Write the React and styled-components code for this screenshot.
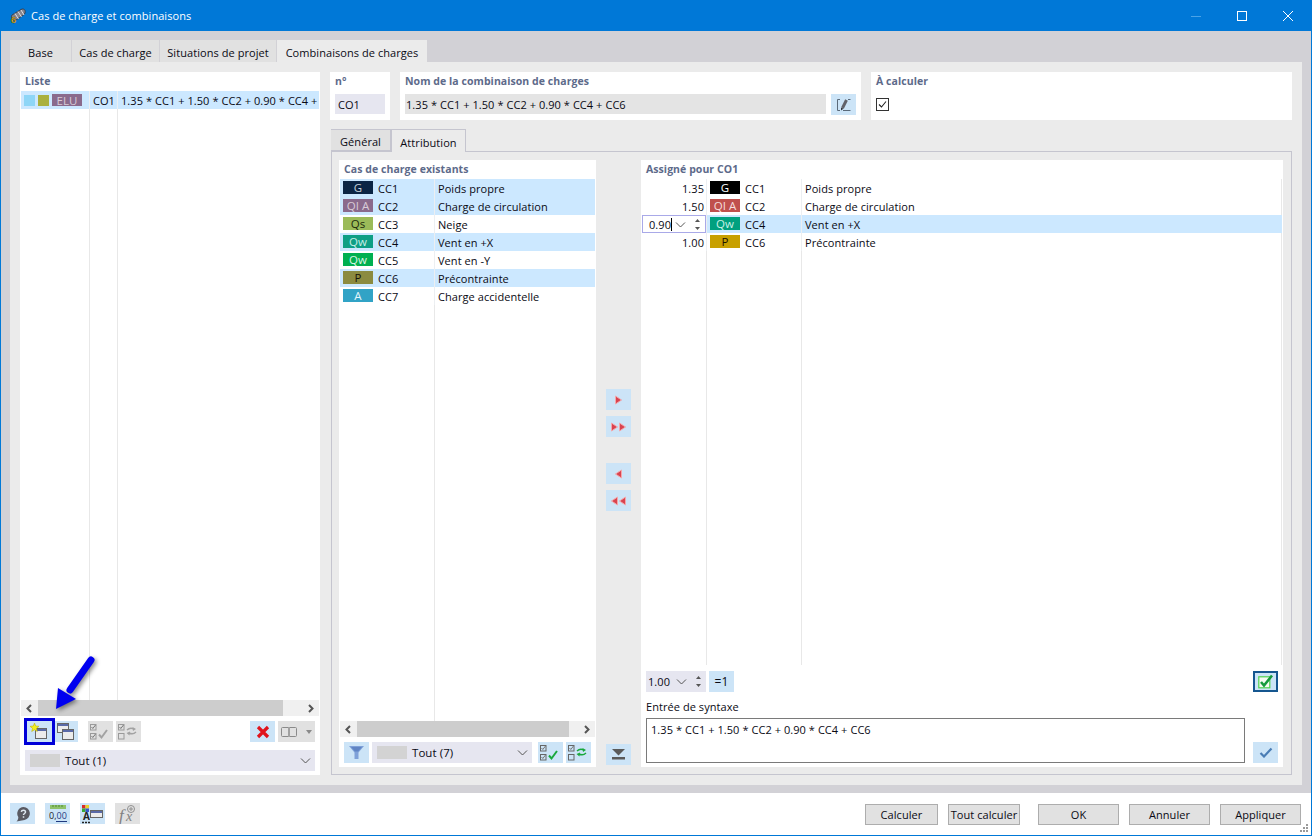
import React from "react";
import styled, { createGlobalStyle } from "styled-components";

const Global = createGlobalStyle`
    html, body { margin: 0; padding: 0; background: #fff; }
    * { box-sizing: border-box; }
    body {
        font-family: "Open Sans", "Liberation Sans", sans-serif;
        font-size: 11px;
        letter-spacing: 0.06px;
        color: #0a0a14;
    }
`;

const Win = styled.div`
    position: relative;
    width: 1312px;
    height: 836px;
    display: flex;
    flex-direction: column;
    border: 1px solid #0078d7;
    border-top: 0;
    overflow: hidden;
`;

const TitleBar = styled.div`
    height: 31px;
    flex: none;
    display: flex;
    align-items: center;
    padding-left: 8px;
    background: #0078d7;
    color: #fff;
    font-size: 11px;
`;

const TitleText = styled.span`
    margin-left: 4px;
`;

const WinCtrl = styled.div`
    width: 46px;
    height: 31px;
    display: flex;
    align-items: center;
    justify-content: center;
    margin-left: ${(p) => (p.$first ? "auto" : "0")};
`;

const Body = styled.div`
    flex: 1;
    min-height: 0;
    display: flex;
    flex-direction: column;
    padding: 9px 9px 8px;
    background: #d2d1d6;
`;

const TabRow = styled.div`
    height: 22px;
    flex: none;
    display: flex;
    gap: 1px;
`;

const Tab = styled.div`
    width: ${(p) => p.$w}px;
    display: flex;
    align-items: center;
    justify-content: center;
    padding-top: 2px;
    background: ${(p) => (p.$active ? "#ebebeb" : "#e1e1e1")};
`;

const MainPanel = styled.div`
    flex: 1;
    min-height: 0;
    display: grid;
    grid-template-columns: 300px 1fr;
    gap: 10px;
    padding: 10px;
    background: #ebebeb;
`;

const Card = styled.div`
    background: #fff;
    display: flex;
    flex-direction: column;
    min-height: 0;
    min-width: 0;
`;

const Heading = styled.div`
    height: 19px;
    flex: none;
    padding: 2px 0 0 ${(p) => p.$pad || 5}px;
    font-weight: 700;
    font-size: 10.5px;
    color: #5d6a8a;
    white-space: nowrap;
`;

const ListArea = styled.div`
    flex: 1;
    min-height: 0;
    margin: 0 ${(p) => p.$mr || 1}px 0 1px;
    overflow: hidden;
    background-image: ${(p) =>
        p.$lines.map(() => "linear-gradient(#e8e8e8, #e8e8e8)").join(",")};
    background-size: 1px 100%;
    background-repeat: no-repeat;
    background-position: ${(p) => p.$lines.map((x) => `${x}px 0`).join(",")};
`;

const Row = styled.div`
    height: 18px;
    display: grid;
    grid-template-columns: ${(p) => p.$cols};
    align-items: stretch;
    background: ${(p) => (p.$on ? "#cce8ff" : "transparent")};
    white-space: nowrap;
`;

const Cell = styled.div`
    display: flex;
    align-items: center;
    gap: ${(p) => p.$gap || 0}px;
    padding-left: ${(p) => p.$pad || 0}px;
    min-width: 0;
    overflow: hidden;
    border-left: ${(p) => (p.$line ? "1px solid #eceff2" : "0")};
`;

const NumCell = styled(Cell)`
    justify-content: flex-end;
    padding-right: 2px;
`;

const EditCell = styled(Cell)`
    background: #fff;
`;

const Swatch = styled.span`
    width: 11px;
    height: 11px;
    flex: none;
    background: ${(p) => p.$c};
`;

const Badge = styled.span`
    width: 30px;
    height: 13px;
    flex: none;
    display: flex;
    align-items: center;
    justify-content: center;
    background: ${(p) => p.$c};
    color: ${(p) => p.$t};
    font-size: 11.5px;
    letter-spacing: 0;
    margin-top: -1px;
`;

const ComboBadge = styled(Badge)`
    height: 12px;
    margin-top: 0;
`;

const Scroll = styled.div`
    height: 16px;
    flex: none;
    margin: 0 1px;
    display: flex;
    align-items: center;
    justify-content: space-between;
    background: #f0f0f0;
`;

const ScrollEnd = styled.div`
    width: 17px;
    height: 16px;
    flex: none;
    display: flex;
    align-items: center;
    justify-content: center;
`;

const Thumb = styled.div`
    height: 16px;
    width: ${(p) => p.$w}px;
    background: #cdcdcd;
`;

const ScrollRest = styled.div`
    flex: 1;
    max-width: ${(p) => p.$w}px;
`;

const Toolbar = styled.div`
    height: 21px;
    flex: none;
    display: flex;
    margin-top: 5px;
    padding-left: 7px;
`;

const IconBtn = styled.div`
    width: ${(p) => p.$w || 25}px;
    height: 21px;
    flex: none;
    display: flex;
    align-items: center;
    justify-content: center;
    margin-left: ${(p) => p.$ml || 0}px;
    background: ${(p) => (p.$off ? "#e1e1e1" : "#cce4f7")};
    outline: ${(p) => (p.$mark ? "3px solid #0000d8" : "0")};
    box-shadow: ${(p) => (p.$focus ? "inset 0 0 0 2px #15568f" : "none")};
    position: relative;
    z-index: ${(p) => (p.$mark ? 1 : 0)};
`;

const Combo = styled.div`
    height: 21px;
    flex: none;
    display: flex;
    align-items: center;
    width: ${(p) => p.$w}px;
    margin: ${(p) => p.$m || 0};
    padding: 0 4px 0 5px;
    background: #e6e6f0;
`;

const ComboSwatch = styled.span`
    width: 30px;
    height: 13px;
    flex: none;
    background: #d3d3d3;
    margin-right: 5px;
`;

const ComboText = styled.span`
    flex: 1;
    font-size: 11.5px;
`;

const RightCol = styled.div`
    display: flex;
    flex-direction: column;
    min-width: 0;
    min-height: 0;
`;

const TopRow = styled.div`
    height: 48px;
    flex: none;
    display: grid;
    grid-template-columns: 60px 461px 421px;
    gap: 10px;
`;

const TopCard = styled(Card)`
    padding-right: 5px;
`;

const FieldRow = styled.div`
    display: flex;
    gap: 5px;
    padding: 3px 0 0 5px;
`;

const Field = styled.div`
    flex: 1;
    height: 20px;
    display: flex;
    align-items: center;
    padding-left: ${(p) => p.$pad || 3}px;
    background: ${(p) => (p.$grey ? "#e4e4e4" : "#e6e6f0")};
    white-space: nowrap;
`;

const Check = styled.div`
    width: 13px;
    height: 13px;
    margin: 7px 0 0 5px;
    border: 1px solid #333;
    display: flex;
    align-items: center;
    justify-content: center;
`;

const SubTabs = styled.div`
    height: 22px;
    flex: none;
    margin-top: 9px;
    display: flex;
    padding-left: 1px;
`;

const SubTab = styled.div`
    width: ${(p) => p.$w}px;
    display: flex;
    align-items: center;
    justify-content: center;
    padding-top: 2px;
    background: ${(p) => (p.$active ? "#ebebeb" : "#e1e1e1")};
    border: 1px solid #c5c5cf;
    border-left-width: ${(p) => (p.$active ? 1 : 0)}px;
    border-bottom-width: ${(p) => (p.$active ? 0 : 1)}px;
    margin-bottom: ${(p) => (p.$active ? -1 : 0)}px;
    position: relative;
    z-index: ${(p) => (p.$active ? 1 : 0)};
`;

const SubPanel = styled.div`
    flex: 1;
    min-height: 0;
    margin-left: 1px;
    border: 1px solid #c5c5cf;
    padding: 8px 8px 7px 7px;
    display: grid;
    grid-template-columns: 257px 45px 642px;
`;

const Gutter = styled.div`
    display: flex;
    flex-direction: column;
    align-items: center;
    padding: 229px 0 2px;
    gap: 6px;
`;

const GapBtn = styled(IconBtn)`
    margin-top: ${(p) => p.$mt || 0}px;
`;

const BottomBtn = styled(IconBtn)`
    margin-top: auto;
`;

const BottomBar = styled.div`
    flex: none;
    height: 21px;
    display: flex;
    margin: 5px 0 4px;
    padding-left: 5px;
`;

const SpinRow = styled.div`
    flex: none;
    height: 21px;
    display: flex;
    margin-top: 6px;
    padding: 0 5px;
`;

const SpinBox = styled.div`
    display: flex;
    align-items: center;
    width: ${(p) => p.$w}px;
    height: ${(p) => p.$h || 21}px;
    background: ${(p) => (p.$edit ? "#fff" : "#e6e6f0")};
    border: ${(p) => (p.$edit ? "1px solid #a9a9e8" : "0")};
    padding-left: ${(p) => (p.$edit ? 6 : 2)}px;
`;

const Caret = styled.span`
    width: 1px;
    height: 13px;
    background: #000;
`;

const SpinIcons = styled.span`
    margin-left: auto;
    display: flex;
    align-items: center;
    gap: 8px;
    padding-right: 4px;
`;

const TextBtn = styled(IconBtn)`
    margin-left: 3px;
    font-size: 12px;
`;

const PushRight = styled.div`
    margin-left: auto;
`;

const SyntaxLabel = styled.div`
    flex: none;
    height: 18px;
    margin-top: 5px;
    padding-left: 5px;
    display: flex;
    align-items: center;
`;

const SyntaxRow = styled.div`
    flex: none;
    display: flex;
    align-items: flex-end;
    gap: 8px;
    padding: 0 5px 4px;
    margin-top: 3px;
`;

const SyntaxBox = styled.div`
    width: 599px;
    height: 45px;
    border: 1px solid #7a7a7a;
    padding: 3px 4px;
`;

const Footer = styled.div`
    height: 42px;
    flex: none;
    display: flex;
    align-items: flex-start;
    padding: 10px 9px 0;
    background: #fff;
    gap: 10px;
`;

const DialogBtn = styled.div`
    width: ${(p) => p.$w}px;
    height: 21px;
    margin-top: 1px;
    margin-left: ${(p) => p.$ml || 0}px;
    display: flex;
    align-items: center;
    justify-content: center;
    background: #e1e1e1;
    border: 1px solid #adadad;
    white-space: nowrap;
`;

const Grip = styled.svg`
    position: absolute;
    right: 2px;
    bottom: 2px;
`;

const Callout = styled.svg`
    position: absolute;
    left: 40px;
    top: 645px;
    z-index: 5;
    overflow: visible;
    filter: drop-shadow(2px 2px 2px rgba(0, 0, 0, 0.45));
`;

const Chevron = ({ dir = "down", c = "#555" }) => (
    <svg width="11" height="9" viewBox="0 0 11 9">
        {dir === "down" && <path d="M1 2.500l4.500 4.500L10 2.500" fill="none" stroke={c} />}
        {dir === "left" && <path d="M7 1L3.500 4.500 7 8" fill="none" stroke={c} strokeWidth="2" />}
        {dir === "right" && <path d="M4 1l3.500 3.500L4 8" fill="none" stroke={c} strokeWidth="2" />}
    </svg>
);

const SpinArrows = () => (
    <svg width="7" height="13" viewBox="0 0 7 13">
        <path d="M3.500 1L6 4H1z" fill="#555" />
        <path d="M3.500 12L6 9H1z" fill="#555" />
    </svg>
);

const AppIcon = () => (
    <svg width="18" height="20" viewBox="0 0 18 20">
        <path d="M3 9L12 3.500c1.500-1 3.500-.5 4 1s0 3.500-1.500 4.500L7 14c-1.500 1-3 .5-3.700-1S2 10 3 9z" fill="#85858e" stroke="#34343a" strokeWidth=".8" />
        <path d="M6 7.500l3.500 5.500M9 5.500l3.500 5.500M12 4l3 5" stroke="#dcdce2" strokeWidth="1" />
        <text x="2" y="16.500" fontSize="9" fontWeight="700" fontFamily="Open Sans" fill="#e8b71a" stroke="#3a2f00" strokeWidth=".3">6</text>
    </svg>
);

const WinIcon = ({ x = 0, y = 0, w = 13, h = 12 }) => (
    <g transform={`translate(${x} ${y})`}>
        <rect x=".5" y=".5" width={w} height={h} fill="#ececec" stroke="#666" />
        <rect x="1" y="1" width={w - 1} height="2" fill="#5a6aa8" />
    </g>
);

const NewIcon = () => (
    <svg width="20" height="18" viewBox="0 0 20 18">
        <WinIcon x={5} y={5} w={11} h={10} />
        <path d="M4.500 0l1.200 3L9 3.300 6.500 5.400 7.300 8.500 4.500 6.800 1.700 8.500 2.500 5.400 0 3.300 3.300 3z" fill="#f2ee1e" stroke="#b7a900" strokeWidth=".5" />
    </svg>
);

const CopyIcon = () => (
    <svg width="17" height="17" viewBox="0 0 17 17">
        <WinIcon x={0} y={0} w={11} h={9} />
        <WinIcon x={5} y={6} w={11} h={10} />
    </svg>
);

const ChecksIcon = ({ c = "#a2a2a2", b = "#9a9a9a" }) => (
    <svg width="22" height="16" viewBox="0 0 22 16">
        <rect x=".5" y=".5" width="5.500" height="5.500" fill="none" stroke={b} />
        <rect x=".5" y="9.500" width="5.500" height="5.500" fill="none" stroke={b} />
        <path d="M1.500 3l1.300 1.500L5.500 1M1.500 12l1.300 1.500 2.700-3.500" fill="none" stroke="#777" />
        <path d="M9 10.500l2.500 3L17 6" fill="none" stroke={c} strokeWidth="2" />
    </svg>
);

const SwapIcon = ({ c = "#a2a2a2", b = "#9a9a9a" }) => (
    <svg width="22" height="16" viewBox="0 0 22 16">
        <rect x=".5" y=".5" width="5.500" height="5.500" fill="none" stroke={b} />
        <rect x=".5" y="9.500" width="5.500" height="5.500" fill="none" stroke={b} />
        <path d="M1.500 3l1.300 1.500L5.500 1" fill="none" stroke="#777" />
        <path d="M9 6c2-2 5-2 7-1M18 8c-2 2-5 2-7 1" fill="none" stroke={c} strokeWidth="1.400" />
        <path d="M14.500 3l3.500 2-3 2zM12 7.500l-3.500 1.500 3 2.500z" fill={c} />
    </svg>
);

const RedX = () => (
    <svg width="14" height="14" viewBox="0 0 14 14">
        <path d="M2 2l10 10M12 2L2 12" stroke="#e0141c" strokeWidth="3.200" />
    </svg>
);

const PairIcon = () => (
    <svg width="32" height="12" viewBox="0 0 32 12">
        <rect x=".5" y="1.500" width="7.500" height="9" rx="1" fill="none" stroke="#8a8a8a" />
        <rect x="8" y="1.500" width="7.500" height="9" rx="1" fill="none" stroke="#8a8a8a" />
        <path d="M25 4h6l-3 4z" fill="#8a8a8a" />
    </svg>
);

const PencilIcon = () => (
    <svg width="16" height="16" viewBox="0 0 16 16">
        <path d="M4 2.500H1.500v11H4M12 2.500h2.500M7 13.500h7.500" fill="none" stroke="#5a6a7a" />
        <path d="M6.500 11L10.500 3" fill="none" stroke="#62626a" strokeWidth="3" />
        <path d="M5 10.500l2.500 1.300L5 13.500z" fill="#33333a" />
    </svg>
);

const Funnel = () => (
    <svg width="15" height="13" viewBox="0 0 15 13">
        <path d="M0 0h15L9.500 6.500V13h-4V6.500z" fill="#7ea0d8" />
        <path d="M2 1h11L9 5.500H6z" fill="#5f84c4" />
    </svg>
);

const MoveDown = () => (
    <svg width="15" height="11" viewBox="0 0 15 11">
        <path d="M1 0h13L7.500 6.500z" fill="#5a5a5a" />
        <rect x="1" y="8" width="13" height="2.500" fill="#5a5a5a" />
    </svg>
);

const Tri = ({ left, x }) => (
    <path
        d={left ? `M${x + 6} 2v8L${x} 6z` : `M${x} 2v8l6-4z`}
        fill="#d9434f"
        stroke="#f3a7ab"
        strokeWidth="1"
    />
);

const MoveArrows = ({ left, two }) => (
    <svg width="17" height="12" viewBox="0 0 17 12">
        {two ? (
            <>
                <Tri left={left} x={1.500} />
                <Tri left={left} x={9.500} />
            </>
        ) : (
            <Tri left={left} x={5.500} />
        )}
    </svg>
);

const HelpIcon = () => (
    <svg width="16" height="16" viewBox="0 0 16 16">
        <path d="M8.500 1a6.500 6.500 0 0 1 1 12.900C7 14.500 4 15 1.500 15.500 3 14 3.300 12.500 3.300 11A6.500 6.500 0 0 1 8.500 1z" fill="#5a5a62" />
        <path d="M6.300 5.800c.3-2 4.200-2 4.200.2 0 1.500-2 1.500-2 3M8.500 10.200v1.600" fill="none" stroke="#dfe8f0" strokeWidth="1.500" />
    </svg>
);

const UnitsIcon = () => (
    <svg width="18" height="19" viewBox="0 0 18 19">
        <rect x="1" y="1" width="16" height="4" fill="#8ec26a" />
        <path d="M4 1v2M7 1v2M10 1v2M13 1v2" stroke="#4e8a33" />
        <text x="0" y="15" fontSize="9" letterSpacing="0" fontFamily="Open Sans" fill="#222">
            0,<tspan fill="#1f3a80">00</tspan>
        </text>
        <rect x="7" y="17" width="11" height="1" fill="#1f3a80" />
    </svg>
);

const ColorsIcon = () => (
    <svg width="21" height="20" viewBox="0 0 21 20">
        <rect x="0" y="1" width="3.500" height="3.500" fill="#d82b2b" />
        <rect x="3.500" y="1" width="3.500" height="3.500" fill="#e8d12a" />
        <rect x="0" y="4.500" width="3.500" height="3.500" fill="#38a838" />
        <rect x="3.500" y="4.500" width="3.500" height="3.500" fill="#3757c8" />
        <WinIcon x={8} y={6} w={12} h={7} />
        <text x="1" y="16" fontSize="10" fontWeight="700" fontFamily="Open Sans" fill="#222">A</text>
        <path d="M0 18.500h2M3 18.500h2M6 18.500h2" stroke="#222" strokeWidth="1.500" />
    </svg>
);

const FxIcon = () => (
    <svg width="22" height="20" viewBox="0 0 22 20">
        <text x="2" y="17" fontSize="17" fontStyle="italic" fontFamily="Liberation Serif" fill="#808080">f</text>
        <text x="9" y="17" fontSize="14" fontStyle="italic" fontFamily="Liberation Serif" fill="#808080">x</text>
        <circle cx="14" cy="5" r="3.500" fill="none" stroke="#909090" />
        <path d="M12 5h4M14 3v4" stroke="#909090" />
    </svg>
);

const GreenCheck = () => (
    <svg width="16" height="15" viewBox="0 0 16 15">
        <rect x=".8" y="2.800" width="11" height="11" fill="#f4fbf2" stroke="#4fd24f" strokeWidth="1.200" />
        <path d="M3 8l3 3.500L14 1.500" fill="none" stroke="#159a3c" strokeWidth="2.600" />
    </svg>
);

const BlueCheck = () => (
    <svg width="14" height="11" viewBox="0 0 14 11">
        <path d="M1.500 6l3.500 3.500L12.500 1.500" fill="none" stroke="#4a7db5" strokeWidth="2.200" />
    </svg>
);

const existing = [
    { b: "G", c: "#0b2545", t: "#c9d2dc", id: "CC1", name: "Poids propre", on: true },
    { b: "QI A", c: "#8a6a8c", t: "#d8ccd8", id: "CC2", name: "Charge de circulation", on: true },
    { b: "Qs", c: "#9bbb59", t: "#1d2a0c", id: "CC3", name: "Neige" },
    { b: "Qw", c: "#0e9f85", t: "#c4eee5", id: "CC4", name: "Vent en +X", on: true },
    { b: "Qw", c: "#00b050", t: "#d9f7e6", id: "CC5", name: "Vent en -Y" },
    { b: "P", c: "#8b8b40", t: "#15150a", id: "CC6", name: "Précontrainte", on: true },
    { b: "A", c: "#31a3c6", t: "#e6f6fb", id: "CC7", name: "Charge accidentelle" },
];

const assigned = [
    { f: "1.35", b: "G", c: "#000", t: "#fff", id: "CC1", name: "Poids propre" },
    { f: "1.50", b: "QI A", c: "#c0504d", t: "#f6dfde", id: "CC2", name: "Charge de circulation" },
    { f: "0.90", b: "Qw", c: "#00a07f", t: "#c8f0e6", id: "CC4", name: "Vent en +X", on: true },
    { f: "1.00", b: "P", c: "#c8a000", t: "#1a1400", id: "CC6", name: "Précontrainte" },
];

const ScrollBar = ({ thumb, after }) => (
    <Scroll>
        <ScrollEnd>
            <Chevron dir="left" />
        </ScrollEnd>
        <Thumb $w={thumb} />
        <ScrollRest $w={after} />
        <ScrollEnd>
            <Chevron dir="right" />
        </ScrollEnd>
    </Scroll>
);

export default function App() {
    return (
        <>
            <Global />
            <Win>
                <TitleBar>
                    <AppIcon />
                    <TitleText>Cas de charge et combinaisons</TitleText>
                    <WinCtrl $first>
                        <svg width="10" height="10"><path d="M0 5.500h10" stroke="#4aa3e8" /></svg>
                    </WinCtrl>
                    <WinCtrl>
                        <svg width="10" height="10"><rect x=".5" y=".5" width="9" height="9" fill="none" stroke="#fff" /></svg>
                    </WinCtrl>
                    <WinCtrl>
                        <svg width="10" height="10"><path d="M0 0l10 10M10 0L0 10" stroke="#fff" /></svg>
                    </WinCtrl>
                </TitleBar>

                <Body>
                    <TabRow>
                        <Tab $w={61}>Base</Tab>
                        <Tab $w={87}>Cas de charge</Tab>
                        <Tab $w={116}>Situations de projet</Tab>
                        <Tab $w={150} $active>Combinaisons de charges</Tab>
                    </TabRow>
                    <MainPanel>
                        <Card>
                            <Heading>Liste</Heading>
                            <ListArea $lines={[68, 96]}>
                                <Row $on $cols="68px 28px 1fr">
                                    <Cell $pad={3} $gap={3}>
                                        <Swatch $c="#8ed6f7" />
                                        <Swatch $c="#aab03f" />
                                        <ComboBadge $c="#8a6a8c" $t="#d8ccd8">ELU</ComboBadge>
                                    </Cell>
                                    <Cell $line $pad={3}>CO1</Cell>
                                    <Cell $line $pad={3}>1.35 * CC1 + 1.50 * CC2 + 0.90 * CC4 +</Cell>
                                </Row>
                            </ListArea>
                            <ScrollBar thumb={245} after={19} />
                            <Toolbar>
                                <IconBtn $mark><NewIcon /></IconBtn>
                                <IconBtn $ml={1}><CopyIcon /></IconBtn>
                                <IconBtn $off $ml={10}><ChecksIcon /></IconBtn>
                                <IconBtn $off $ml={3}><SwapIcon /></IconBtn>
                                <IconBtn $ml={109}><RedX /></IconBtn>
                                <IconBtn $off $ml={3} $w={37}><PairIcon /></IconBtn>
                            </Toolbar>
                            <Combo $w={290} $m="8px 0 4px 5px">
                                <ComboSwatch />
                                <ComboText>Tout (1)</ComboText>
                                <Chevron />
                            </Combo>
                        </Card>

                        <RightCol>
                            <TopRow>
                                <TopCard>
                                    <Heading>n°</Heading>
                                    <FieldRow>
                                        <Field>CO1</Field>
                                    </FieldRow>
                                </TopCard>
                                <TopCard>
                                    <Heading>Nom de la combinaison de charges</Heading>
                                    <FieldRow>
                                        <Field $grey $pad={1}>1.35 * CC1 + 1.50 * CC2 + 0.90 * CC4 + CC6</Field>
                                        <IconBtn><PencilIcon /></IconBtn>
                                    </FieldRow>
                                </TopCard>
                                <TopCard>
                                    <Heading>À calculer</Heading>
                                    <Check>
                                        <svg width="11" height="11" viewBox="0 0 11 11">
                                            <path d="M2 5.500l2.500 2.500L9 2.500" fill="none" stroke="#222" strokeWidth="1.100" />
                                        </svg>
                                    </Check>
                                </TopCard>
                            </TopRow>

                            <SubTabs>
                                <SubTab $w={60}>Général</SubTab>
                                <SubTab $w={75} $active>Attribution</SubTab>
                            </SubTabs>
                            <SubPanel>
                                <Card>
                                    <Heading>Cas de charge existants</Heading>
                                    <ListArea $lines={[94]}>
                                        {existing.map((r) => (
                                            <Row key={r.id} $on={r.on} $cols="94px 1fr">
                                                <Cell $pad={3} $gap={5}>
                                                    <Badge $c={r.c} $t={r.t}>{r.b}</Badge>
                                                    {r.id}
                                                </Cell>
                                                <Cell $line $pad={3}>{r.name}</Cell>
                                            </Row>
                                        ))}
                                    </ListArea>
                                    <ScrollBar thumb={212} after={9} />
                                    <BottomBar>
                                        <IconBtn><Funnel /></IconBtn>
                                        <Combo $w={160} $m="0 0 0 3px">
                                            <ComboSwatch />
                                            <ComboText>Tout (7)</ComboText>
                                            <Chevron />
                                        </Combo>
                                        <IconBtn $ml={6}><ChecksIcon c="#19a83c" b="#666" /></IconBtn>
                                        <IconBtn $ml={3}><SwapIcon c="#19a83c" b="#666" /></IconBtn>
                                    </BottomBar>
                                </Card>

                                <Gutter>
                                    <IconBtn><MoveArrows /></IconBtn>
                                    <IconBtn><MoveArrows two /></IconBtn>
                                    <GapBtn $mt={20}><MoveArrows left /></GapBtn>
                                    <IconBtn><MoveArrows left two /></IconBtn>
                                    <BottomBtn><MoveDown /></BottomBtn>
                                </Gutter>

                                <Card>
                                    <Heading>Assigné pour CO1</Heading>
                                    <ListArea $lines={[64, 159, 639]} $mr={1}>
                                        {assigned.map((r) => (
                                            <Row key={r.id} $on={r.on} $cols="64px 95px 480px">
                                                {r.on ? (
                                                    <EditCell>
                                                        <SpinBox $edit $w={64} $h={18}>
                                                            {r.f}
                                                            <Caret />
                                                            <SpinIcons>
                                                                <Chevron />
                                                                <SpinArrows />
                                                            </SpinIcons>
                                                        </SpinBox>
                                                    </EditCell>
                                                ) : (
                                                    <NumCell>{r.f}</NumCell>
                                                )}
                                                <Cell $line $pad={3} $gap={5}>
                                                    <Badge $c={r.c} $t={r.t}>{r.b}</Badge>
                                                    {r.id}
                                                </Cell>
                                                <Cell $line $pad={3}>{r.name}</Cell>
                                            </Row>
                                        ))}
                                    </ListArea>
                                    <SpinRow>
                                        <SpinBox $w={60}>
                                            1.00
                                            <SpinIcons>
                                                <Chevron />
                                                <SpinArrows />
                                            </SpinIcons>
                                        </SpinBox>
                                        <TextBtn>=1</TextBtn>
                                        <PushRight>
                                            <IconBtn $focus><GreenCheck /></IconBtn>
                                        </PushRight>
                                    </SpinRow>
                                    <SyntaxLabel>Entrée de syntaxe</SyntaxLabel>
                                    <SyntaxRow>
                                        <SyntaxBox>1.35 * CC1 + 1.50 * CC2 + 0.90 * CC4 + CC6</SyntaxBox>
                                        <IconBtn><BlueCheck /></IconBtn>
                                    </SyntaxRow>
                                </Card>
                            </SubPanel>
                        </RightCol>
                    </MainPanel>
                </Body>

                <Footer>
                    <IconBtn><HelpIcon /></IconBtn>
                    <IconBtn><UnitsIcon /></IconBtn>
                    <IconBtn><ColorsIcon /></IconBtn>
                    <IconBtn $off><FxIcon /></IconBtn>
                    <DialogBtn $w={73} $ml={715}>Calculer</DialogBtn>
                    <DialogBtn $w={72}>Tout calculer</DialogBtn>
                    <DialogBtn $w={81} $ml={8}>OK</DialogBtn>
                    <DialogBtn $w={81}>Annuler</DialogBtn>
                    <DialogBtn $w={81}>Appliquer</DialogBtn>
                </Footer>
                <Grip width="9" height="9" viewBox="0 0 9 9" fill="#9a9a9a">
                    <rect x="6" y="0" width="2" height="2" />
                    <rect x="3" y="3" width="2" height="2" />
                    <rect x="6" y="3" width="2" height="2" />
                    <rect x="0" y="6" width="2" height="2" />
                    <rect x="3" y="6" width="2" height="2" />
                    <rect x="6" y="6" width="2" height="2" />
                </Grip>
                <Callout width="60" height="70" viewBox="0 0 60 70">
                    <path d="M50 15L29 45" stroke="#0000f0" strokeWidth="7" strokeLinecap="round" />
                    <path d="M15 64L17 43 35 54z" fill="#0000f0" />
                </Callout>
            </Win>
        </>
    );
}
